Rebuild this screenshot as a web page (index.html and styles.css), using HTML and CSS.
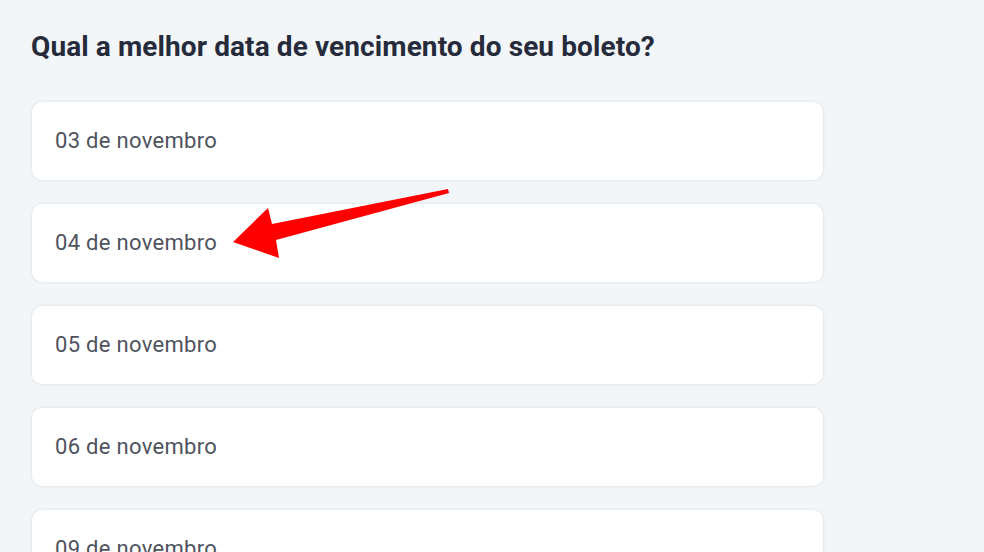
FILE: index.html
```html
<!DOCTYPE html>
<html lang="pt">
<head>
<meta charset="utf-8">
<link rel="stylesheet" href="styles.css">
</head>
<body>
<main class="page">
  <h1 class="title">Qual a melhor data de vencimento do seu boleto?</h1>
  <div class="options">
    <div class="option">03 de novembro</div>
    <div class="option">04 de novembro</div>
    <div class="option">05 de novembro</div>
    <div class="option">06 de novembro</div>
    <div class="option">09 de novembro</div>
  </div>
</main>
<svg class="arrow" width="984" height="552" viewBox="0 0 984 552">
  <polygon points="233,242 268,208 272,224 448,189 449,193 276,240 279,258" fill="#ff0000"/>
</svg>
</body>
</html>
```
FILE: styles.css
```css
html, body {
  margin: 0;
  padding: 0;
  background: #f3f6f9;
  height: 100%;
  overflow: hidden;
}
.page {
  padding: 30px 0 0 32px;
  width: 791px;
  font-family: Roboto, "Liberation Sans", sans-serif;
}
.title {
  margin: 0 0 38px -1px;
  font-size: 28px;
  font-weight: 700;
  letter-spacing: 0.1px;
  color: #262b3b;
  line-height: 34px;
}
.options {
  display: flex;
  flex-direction: column;
  gap: 24px;
}
.option {
  height: 78px;
  box-sizing: border-box;
  background: #fff;
  border-radius: 10px;
  box-shadow: 0 0 3px rgba(0,0,0,0.12);
  display: flex;
  align-items: center;
  padding-left: 23px;
  padding-bottom: 2px;
  font-size: 22px;
  letter-spacing: 0.3px;
  color: #50535d;
  flex-shrink: 0;
}
.arrow {
  position: absolute;
  left: 0;
  top: 0;
}
```
